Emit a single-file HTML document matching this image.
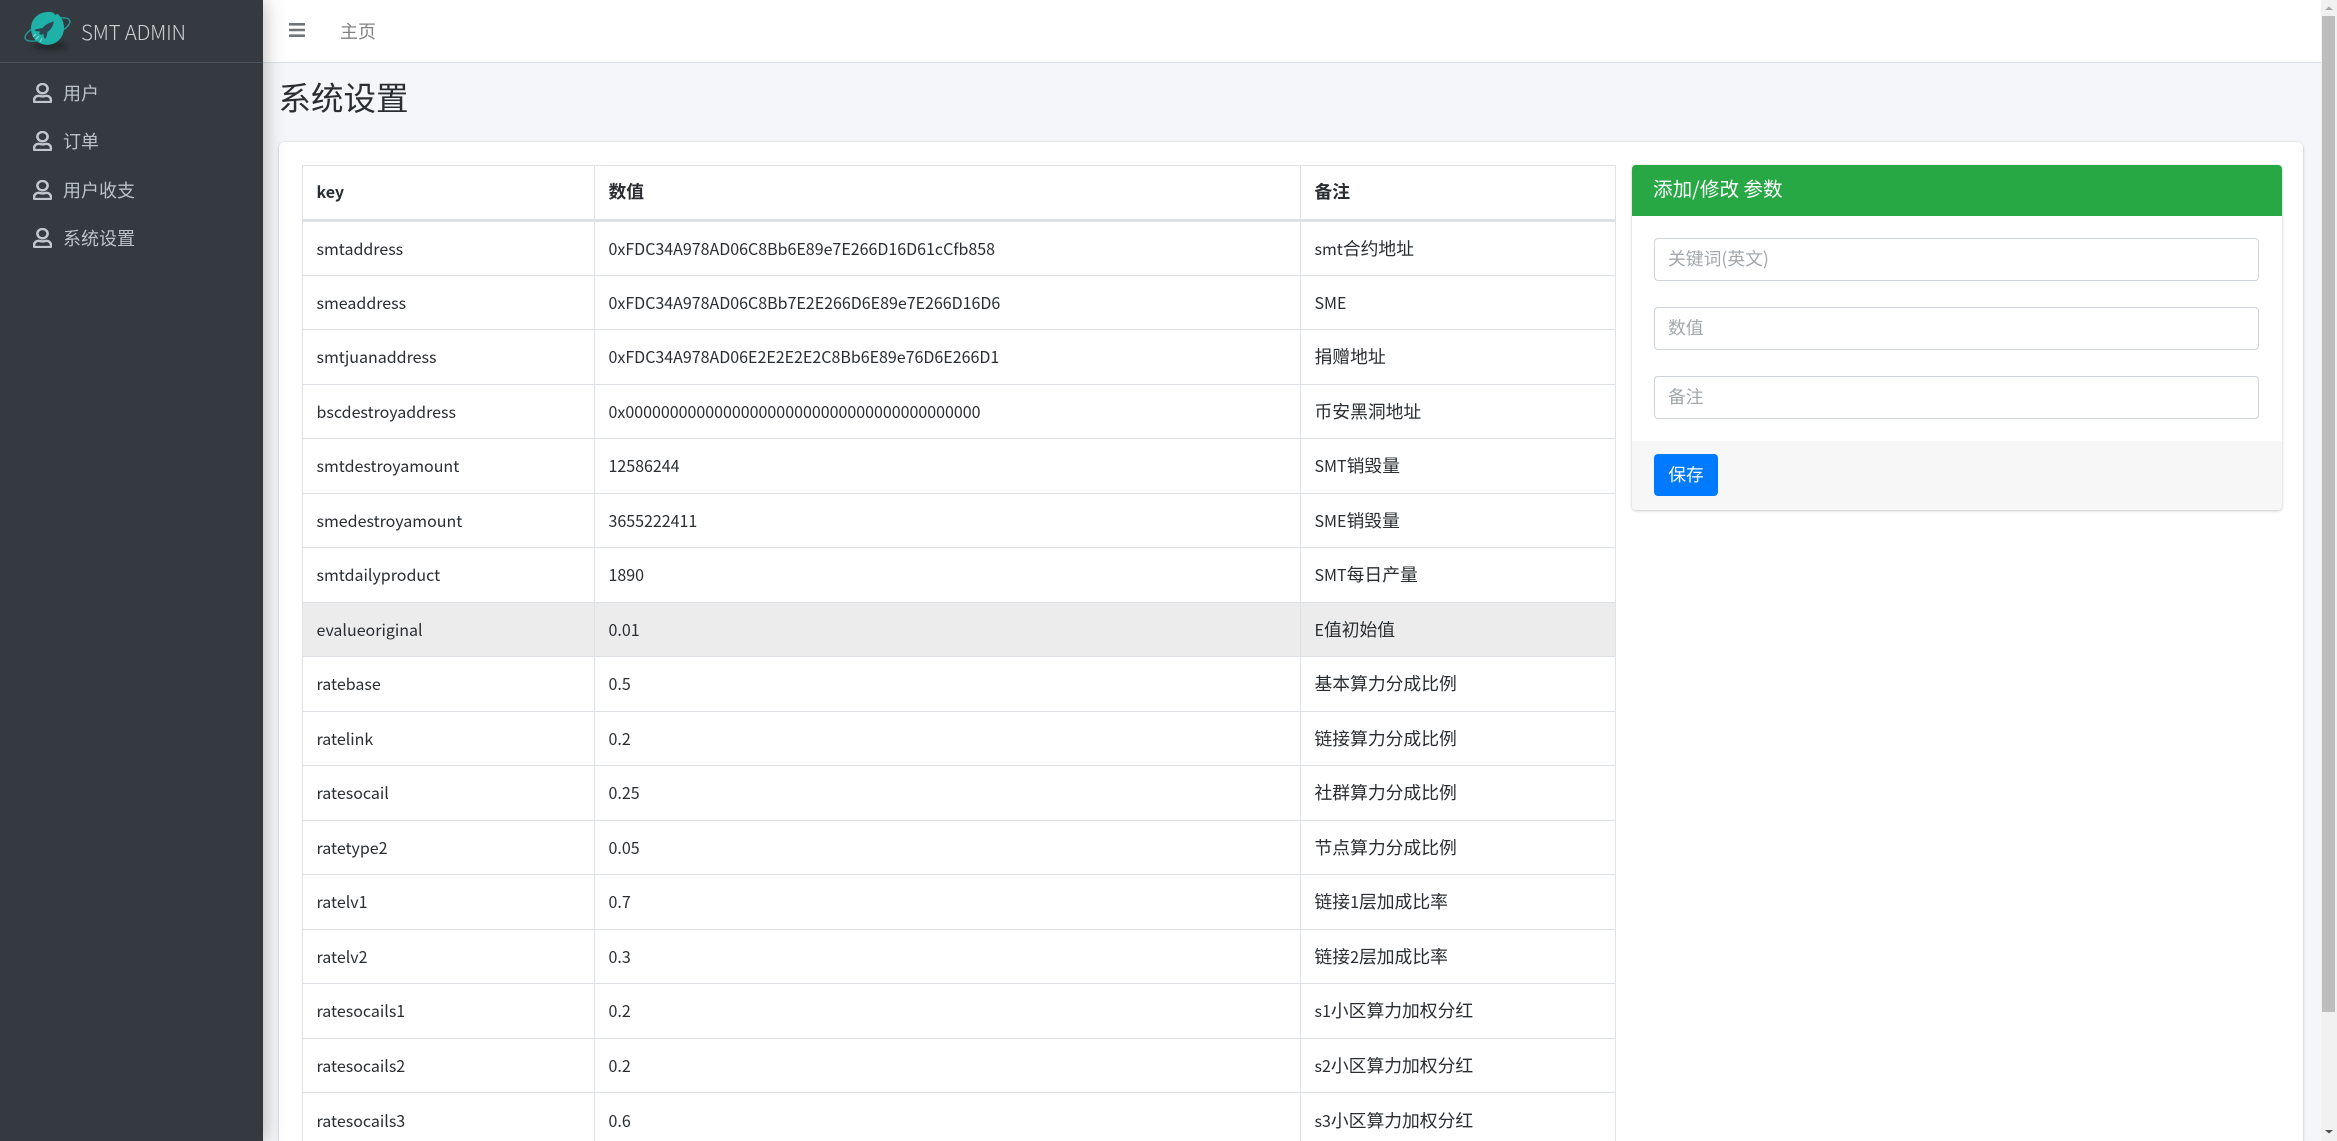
<!DOCTYPE html>
<html lang="zh"><head><meta charset="utf-8"><title>系统设置</title>
<style>
*{box-sizing:border-box}
html,body{margin:0;padding:0;width:2337px;height:1141px;overflow:hidden;background:#f4f6f9;font-family:"Noto Sans CJK SC","Liberation Sans",sans-serif;color:#2a2e32}
#wrap{position:relative;width:2337px;height:1141px;overflow:hidden;background:#f4f6f9}
.abs{position:absolute}
#side{left:0;top:0;width:263px;height:1141px;background:#343a40;box-shadow:0 0 20px rgba(0,0,0,.3);z-index:5}
#brandline{left:0;top:62px;width:263px;height:1px;background:#4b545c}
#brand{left:81px;top:16px;font-size:20.5px;line-height:30px;font-weight:300;color:rgba(255,255,255,.75);white-space:nowrap;letter-spacing:-.2px}
.nav{left:63px;font-size:18px;line-height:26px;color:#bcc1ca;white-space:nowrap}
.ico{left:33px;width:19px;height:20px;fill:#c2c7d0;stroke:#c2c7d0;stroke-width:12}
#top{left:263px;top:0;width:2058px;height:63px;background:#fff;border-bottom:1px solid #dee2e6}
#home{left:340px;top:17.5px;font-size:18px;line-height:26px;color:rgba(0,0,0,.5)}
#title{left:278.5px;top:72px;font-size:32.5px;line-height:50px;white-space:nowrap}
#card{left:279px;top:142px;width:2024px;height:999px;background:#fff;border-radius:5px 5px 0 0;box-shadow:0 0 1px rgba(0,0,0,.125),0 1px 3px rgba(0,0,0,.2)}
table{position:absolute;left:302px;top:165px;width:1313.5px;border-collapse:collapse;table-layout:fixed;font-size:16px}
td,th{border:1px solid #dee2e6;height:54.5px;padding:0 0 1.5px 13.5px;text-align:left;vertical-align:middle;line-height:24px;white-space:nowrap;font-weight:400}
th{font-weight:700;height:55px;border-bottom:3px solid #dee2e6;padding-bottom:3px}
tr.last td{height:48px;border-bottom:0;vertical-align:top;padding:14.5px 0 0 13.5px}
.c{font-size:17.8px}
tr.h td{background:#ececec}
#pcard{left:1632px;top:165px;width:649.5px;height:345px;background:#fff;border-radius:4px;box-shadow:0 0 1px rgba(0,0,0,.125),0 1px 3px rgba(0,0,0,.2);overflow:hidden}
#phead{left:1632px;top:165px;width:649.5px;height:51px;background:#28a745;border-radius:4px 4px 0 0;color:#fff;font-size:19.6px;line-height:46px;padding-left:21px;white-space:nowrap}
.inp{left:1654px;width:605px;height:43px;border:1px solid #ced4da;border-radius:4px;background:#fff;font-size:17.8px;line-height:38px;padding-left:13px;color:#a3a8ad;white-space:nowrap}
#pfoot{left:1632px;top:441px;width:649.5px;height:69px;background:#f7f7f7;border-radius:0 0 4px 4px}
#btn{left:1654px;top:454px;width:64px;height:42px;background:#007bff;border-radius:4px;color:#fff;font-size:17.8px;line-height:40px;text-align:center}
#sb{left:2321px;top:0;width:16px;height:1141px;background:#f1f1f1}
#thumb{left:2322px;top:16px;width:13px;height:996px;background:#bdbdbd}
</style></head><body>
<div id="wrap">

<div class="abs" id="top"></div>
<svg class="abs" style="left:289px;top:23px" width="16" height="14" viewBox="0 0 16 14"><rect width="16" height="2.6" y="0" rx=".5" fill="#6f7479"/><rect width="16" height="2.6" y="5.7" rx=".5" fill="#6f7479"/><rect width="16" height="2.6" y="11.4" rx=".5" fill="#6f7479"/></svg>
<div class="abs" id="home">主页</div>
<div class="abs" id="title">系统设置</div>
<div class="abs" id="card"></div>

<table>
<colgroup><col style="width:292px"><col style="width:706px"><col></colgroup>
<tr><th>key</th><th><span class="c">数值</span></th><th><span class="c">备注</span></th></tr>
<tr><td>smtaddress</td><td>0xFDC34A978AD06C8Bb6E89e7E266D16D61cCfb858</td><td>smt<span class="c">合约地址</span></td></tr>
<tr><td>smeaddress</td><td>0xFDC34A978AD06C8Bb7E2E266D6E89e7E266D16D6</td><td>SME</td></tr>
<tr><td>smtjuanaddress</td><td>0xFDC34A978AD06E2E2E2E2C8Bb6E89e76D6E266D1</td><td><span class="c">捐赠地址</span></td></tr>
<tr><td>bscdestroyaddress</td><td>0x0000000000000000000000000000000000000000</td><td><span class="c">币安黑洞地址</span></td></tr>
<tr><td>smtdestroyamount</td><td>12586244</td><td>SMT<span class="c">销毁量</span></td></tr>
<tr><td>smedestroyamount</td><td>3655222411</td><td>SME<span class="c">销毁量</span></td></tr>
<tr><td>smtdailyproduct</td><td>1890</td><td>SMT<span class="c">每日产量</span></td></tr>
<tr class="h"><td>evalueoriginal</td><td>0.01</td><td>E<span class="c">值初始值</span></td></tr>
<tr><td>ratebase</td><td>0.5</td><td><span class="c">基本算力分成比例</span></td></tr>
<tr><td>ratelink</td><td>0.2</td><td><span class="c">链接算力分成比例</span></td></tr>
<tr><td>ratesocail</td><td>0.25</td><td><span class="c">社群算力分成比例</span></td></tr>
<tr><td>ratetype2</td><td>0.05</td><td><span class="c">节点算力分成比例</span></td></tr>
<tr><td>ratelv1</td><td>0.7</td><td><span class="c">链接</span>1<span class="c">层加成比率</span></td></tr>
<tr><td>ratelv2</td><td>0.3</td><td><span class="c">链接</span>2<span class="c">层加成比率</span></td></tr>
<tr><td>ratesocails1</td><td>0.2</td><td>s1<span class="c">小区算力加权分红</span></td></tr>
<tr><td>ratesocails2</td><td>0.2</td><td>s2<span class="c">小区算力加权分红</span></td></tr>
<tr class="last"><td>ratesocails3</td><td>0.6</td><td>s3<span class="c">小区算力加权分红</span></td></tr>
</table>

<div class="abs" id="pcard"></div>
<div class="abs" id="phead">添加/修改 参数</div>
<div class="abs inp" style="top:238px">关键词(英文)</div>
<div class="abs inp" style="top:307px">数值</div>
<div class="abs inp" style="top:376px">备注</div>
<div class="abs" id="pfoot"></div>
<div class="abs" id="btn">保存</div>

<div class="abs" id="side"></div>
<div style="position:absolute;left:0;top:0;z-index:6;width:263px;height:300px">
<div class="abs" id="brandline"></div>
<svg class="abs" style="left:15px;top:5px" width="70" height="50" viewBox="0 0 70 50">
<defs><filter id="b" x="-30%" y="-80%" width="160%" height="260%"><feGaussianBlur stdDeviation="2.5"/></filter></defs>
<ellipse cx="35" cy="41" rx="17" ry="4" fill="#1d2023" opacity=".75" filter="url(#b)"/>
<ellipse cx="32.5" cy="24.5" rx="24" ry="8" transform="rotate(-22 32.5 24.5)" fill="none" stroke="#1f9d99" stroke-width="1.4"/>
<path d="M30 7.2c3-.6 6-.3 8.500.5l1.500 2.200 2.500-1c4 3 6.500 8 6.500 14 0 9.500-7.500 17-16.500 17S16 33 16 23.500C16 15 22 8.500 30 7.200z" fill="#1fb0a8"/>
<path d="M39 16.500c-4.500.8-8.500 3-11.500 6.500l-6.500 1.200c-1.500.5-1 2 .5 2l3.500.3-.8 2.500 2.500 1 1.500-1.500.8 4c.5 1.500 2 1 2.200 0l1.300-5.500c3.500-2.500 5.500-6 6.500-10.500z" fill="#2d4752"/>
<path d="M24 31l-3.500 3.500M21 29l-3 2.500M27 33.500l-2 3.500" stroke="#9fdcd8" stroke-width="1.200" fill="none" opacity=".8"/>
</svg>
<div class="abs" id="brand">SMT ADMIN</div>

<svg class="abs ico" style="top:83px" viewBox="0 0 448 512" preserveAspectRatio="none"><path d="M313.6 304c-28.7 0-42.5 16-89.6 16-47.1 0-60.8-16-89.6-16C60.2 304 0 364.2 0 438.4V464c0 26.5 21.5 48 48 48h352c26.5 0 48-21.5 48-48v-25.6c0-74.2-60.2-134.4-134.4-134.4zM400 464H48v-25.6c0-47.6 38.8-86.4 86.4-86.4 14.6 0 38.3 16 89.6 16 51.7 0 74.9-16 89.6-16 47.6 0 86.4 38.8 86.4 86.4V464zM224 288c79.5 0 144-64.5 144-144S303.5 0 224 0 80 64.5 80 144s64.5 144 144 144zm0-240c52.9 0 96 43.1 96 96s-43.1 96-96 96-96-43.1-96-96 43.1-96 96-96z"/></svg>
<div class="abs nav" style="top:80px">用户</div>
<svg class="abs ico" style="top:131px" viewBox="0 0 448 512" preserveAspectRatio="none"><path d="M313.6 304c-28.7 0-42.5 16-89.6 16-47.1 0-60.8-16-89.6-16C60.2 304 0 364.2 0 438.4V464c0 26.5 21.5 48 48 48h352c26.5 0 48-21.5 48-48v-25.6c0-74.2-60.2-134.4-134.4-134.4zM400 464H48v-25.6c0-47.6 38.8-86.4 86.4-86.4 14.6 0 38.3 16 89.6 16 51.7 0 74.9-16 89.6-16 47.6 0 86.4 38.8 86.4 86.4V464zM224 288c79.5 0 144-64.5 144-144S303.5 0 224 0 80 64.5 80 144s64.5 144 144 144zm0-240c52.9 0 96 43.1 96 96s-43.1 96-96 96-96-43.1-96-96 43.1-96 96-96z"/></svg>
<div class="abs nav" style="top:128px">订单</div>
<svg class="abs ico" style="top:180px" viewBox="0 0 448 512" preserveAspectRatio="none"><path d="M313.6 304c-28.7 0-42.5 16-89.6 16-47.1 0-60.8-16-89.6-16C60.2 304 0 364.2 0 438.4V464c0 26.5 21.5 48 48 48h352c26.5 0 48-21.5 48-48v-25.6c0-74.2-60.2-134.4-134.4-134.4zM400 464H48v-25.6c0-47.6 38.8-86.4 86.4-86.4 14.6 0 38.3 16 89.6 16 51.7 0 74.9-16 89.6-16 47.6 0 86.4 38.8 86.4 86.4V464zM224 288c79.5 0 144-64.5 144-144S303.5 0 224 0 80 64.5 80 144s64.5 144 144 144zm0-240c52.9 0 96 43.1 96 96s-43.1 96-96 96-96-43.1-96-96 43.1-96 96-96z"/></svg>
<div class="abs nav" style="top:176.5px">用户收支</div>
<svg class="abs ico" style="top:228px" viewBox="0 0 448 512" preserveAspectRatio="none"><path d="M313.6 304c-28.7 0-42.5 16-89.6 16-47.1 0-60.8-16-89.6-16C60.2 304 0 364.2 0 438.4V464c0 26.5 21.5 48 48 48h352c26.5 0 48-21.5 48-48v-25.6c0-74.2-60.2-134.4-134.4-134.4zM400 464H48v-25.6c0-47.6 38.8-86.4 86.4-86.4 14.6 0 38.3 16 89.6 16 51.7 0 74.9-16 89.6-16 47.6 0 86.4 38.8 86.4 86.4V464zM224 288c79.5 0 144-64.5 144-144S303.5 0 224 0 80 64.5 80 144s64.5 144 144 144zm0-240c52.9 0 96 43.1 96 96s-43.1 96-96 96-96-43.1-96-96 43.1-96 96-96z"/></svg>
<div class="abs nav" style="top:224.5px">系统设置</div>
</div>

<div class="abs" id="sb"></div>
<div class="abs" id="thumb"></div>
<svg class="abs" style="left:2322px;top:4px" width="14" height="8" viewBox="0 0 14 8"><path d="M3 6L7 2.5 11 6z" fill="#a8a8a8"/></svg>
<svg class="abs" style="left:2322px;top:1128px" width="14" height="8" viewBox="0 0 14 8"><path d="M3 2L7 5.5 11 2z" fill="#505050"/></svg>
</div>
</body></html>
